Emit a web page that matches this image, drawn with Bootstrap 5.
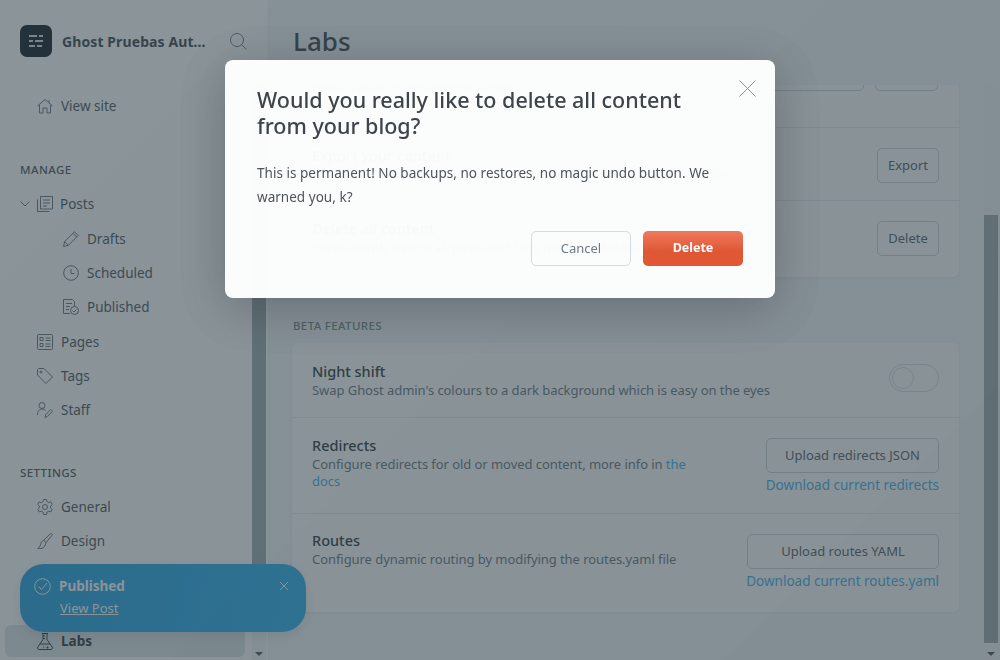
<!DOCTYPE html>
<html lang="en">
<head>
  <meta charset="UTF-8">
  <title>Labs - Ghost Pruebas</title>
  <meta name="viewport" content="width=device-width, initial-scale=1">
  <link href="https://cdn.jsdelivr.net/npm/bootstrap@5.3.3/dist/css/bootstrap.min.css" rel="stylesheet">
  <style>
    html, body { height: 100%; overflow: hidden; }
    body { font-family: "Noto Sans", "Open Sans", sans-serif; background: #f4f8fb; color: #3b444a; font-size: 13px; }
    svg { fill: none; stroke: currentColor; stroke-width: 1; flex: none; }

    /* sidebar */
    .side-wrap { width: 269px; height: 660px; background: #fff; border-right: 1px solid #f0f4f6; flex: none; }
    .side-head { height: 32px; margin: 25px 0 13px 20px; }
    .side-logo { width: 32px; height: 32px; background: #0f1b23; border-radius: 7px; color: #d5dbde; }
    .side-title { font-size: 14px; font-weight: 700; color: #3d4449; width: 150px; margin-left: 10px; white-space: nowrap; overflow: hidden; text-overflow: ellipsis; letter-spacing: .1px; }
    .side-search { color: #6e7b83; margin-left: 18px; }
    .side-nav { width: 252px; padding-top: 19px; }
    .nav-line { display: flex; align-items: center; height: 34px; padding-left: 37px; gap: 8px; color: #4b5358; font-size: 13.5px; }
    .nav-line svg { color: #66737b; }
    .nav-line.sub { padding-left: 63px; }
    .nav-line.caret { padding-left: 20px; gap: 7px; }
    .nudge-1 { margin-top: 1px; }
    .nav-line.on { margin: 67px 7px 0 5px; padding-left: 32px; height: 32px; background: #dfe5e8; border-radius: 6px; font-weight: 700; color: #2f363a; }
    .nav-line.on svg { color: #2f363a; }
    .nav-cap { padding-left: 20px; font-size: 11.5px; letter-spacing: .4px; color: #4b5358; font-weight: 500; height: 16px; line-height: 16px; }
    .gap-manage { margin-top: 39px; margin-bottom: 9px; }
    .gap-settings { margin-top: 38px; margin-bottom: 9px; }

    /* fake native scrollbars */
    .bar-track { width: 14px; background: #f4f6f7; display: flex; flex-direction: column; align-items: center; flex: none; }
    .bar-up { width: 0; height: 0; border: 4px solid transparent; border-top: 0; border-bottom: 4px solid #aab3b8; margin: 5px 0 6px; }
    .bar-down { width: 0; height: 0; border: 4px solid transparent; border-bottom: 0; border-top: 4px solid #4b5358; margin-top: auto; margin-bottom: 4px; }
    .bar-thumb { width: 100%; background: #a0aaaf; }
    .thumb-side { height: 520px; }
    .thumb-main { height: 428px; margin-top: 130px; }
    .bar-main { margin-right: 2px; }

    /* main column */
    .main-wrap { height: 660px; min-width: 0; }
    .main-head { height: 85px; padding: 24px 0 0 24px; flex: none; }
    .main-head h1 { font-size: 26px; font-weight: 500; line-height: 34px; margin: 0; color: #3d4449; }
    .main-clip { overflow: hidden; padding: 0 26px 0 23px; }
    .set-card { width: 667px; border: 0; border-radius: 6px; background: #fff; font-size: 13px; box-shadow: 0 1px 3px rgba(0, 0, 0, .06); }
    .first-card { margin-top: -42px; }
    .set-row { display: flex; justify-content: space-between; padding: 0 20px; border-bottom: 1px solid #e8edf0; }
    .set-row:last-child { border-bottom: 0; }
    .row-a { height: 85px; padding-top: 13px; }
    .row-b { height: 73px; padding-top: 17px; }
    .row-c { height: 76px; padding-top: 17px; }
    .row-d { height: 75px; padding-top: 18px; }
    .row-e { height: 96px; padding-top: 17px; }
    .row-f { height: 98px; padding-top: 16px; }
    .row-d .set-desc, .row-f .set-desc { margin-top: 1px; }
    .set-name { font-size: 14.5px; font-weight: 500; color: #2f363a; line-height: 20px; margin-bottom: 1px; }
    .set-desc { color: #6b767d; line-height: 17px; width: 400px; letter-spacing: -.06px; }
    .set-desc.wide { width: 480px; }
    .set-desc.thin { width: 240px; }
    .set-desc a, .set-link { color: #3eb0ef; text-decoration: none; }
    .set-btn { border: 1px solid #c9d3d8; border-radius: 5px; background: #fff; color: #566067; font-size: 13px; height: 35px; line-height: 33px; padding: 0; text-align: center; }
    .btn-sm-w { width: 62px; }
    .btn-import { width: 288px; margin-right: 11px; }
    .row-a .btn-sm-w { width: 63px; margin-right: 1px; }
    .btn-red-w { width: 173px; display: block; margin-left: auto; }
    .btn-rou-w { width: 192px; display: block; margin-left: auto; }
    .row-b .set-btn { margin-top: 3px; }
    .row-c .set-btn { margin-top: 3px; }
    .row-e .set-btn { margin-top: 3px; }
    .row-f .set-btn { margin-top: 4px; }
    .set-link { display: block; font-size: 13.5px; line-height: 24px; text-align: right; white-space: nowrap; }
    .beta-cap { font-size: 11.5px; font-weight: 500; color: #7c878d; margin: 42px 0 10px 1px; line-height: 14px; letter-spacing: .35px; }
    .set-toggle { width: 50px; height: 28px; border: 1px solid #d5dde1; border-radius: 14px; margin-top: 3px; padding: 2px; background: #fff; }
    .set-knob { width: 22px; height: 22px; border-radius: 50%; border: 1px solid #d5dde1; background: #fff; }

    /* toast sits under the backdrop */
    .pub-toast { position: absolute; left: 20px; top: 564px; width: 286px; height: 68px; border-radius: 24px; background: linear-gradient(100deg, #239fe0, #2bb0f0); color: #fff; padding: 12px 13px 0 14px; font-size: 13.5px; box-shadow: 0 4px 12px rgba(0, 0, 0, .1); }
    .pub-toast a { color: #fff; display: block; margin-left: 26px; margin-top: 3px; font-size: 13px; }

    /* dim layer + dialog */
    .modal-backdrop.dim-layer { opacity: 1; background: linear-gradient(135deg, rgba(50, 68, 76, .57), rgba(50, 66, 74, .58)); }
    .del-dialog { width: 550px; max-width: 550px; margin: 60px auto 0; opacity: .97; }
    .del-box { height: 238px; border: 0; border-radius: 8px; padding: 27px 32px 0 32px; box-shadow: 0 10px 50px rgba(0, 0, 0, .25); color: #3d4449; }
    .del-title { font-size: 21.5px; line-height: 26px; font-weight: 500; width: 450px; margin: 0 0 22px; color: #3a4248; }
    .del-text { font-size: 13.5px; line-height: 24px; margin: 0; color: #4a5358; width: 470px; letter-spacing: .03px; }
    .del-close { position: absolute; right: 19px; top: 20px; color: #8a9499; background: none; border: 0; padding: 0; line-height: 0; }
    .del-foot { margin-top: 22px; gap: 12px; }
    .del-cancel, .del-go { width: 100px; height: 35px; border-radius: 5px; font-size: 13px; padding: 0; }
    .del-cancel { border: 1px solid #d5dfe3; background: #fff; color: #6f7b82; }
    .del-go { border: 0; background: linear-gradient(#f2785b, #e25530 60%); color: #fff; font-weight: 700; font-size: 12.5px; }
  </style>
</head>
<body>
  <div class="d-flex">
    <!-- sidebar -->
    <div class="side-wrap d-flex flex-column">
      <div class="side-head d-flex align-items-center align-self-start">
        <div class="side-logo d-flex align-items-center justify-content-center">
          <svg width="16" height="14" viewBox="0 0 16 14" style="stroke-width:2.200"><path d="M1 2h8M11 2h4M1 7h4M7 7h8M1 12h6M9 12h5"/></svg>
        </div>
        <div class="side-title">Ghost Pruebas Automatizadas</div>
        <svg class="side-search" width="17" height="17" viewBox="0 0 17 17"><circle cx="7" cy="7" r="6.500"/><path d="M11.500 11.500l5 5"/></svg>
      </div>
      <div class="d-flex flex-grow-1">
        <div class="side-nav">
          <div class="nav-line"><svg width="16" height="16" viewBox="0 0 16 16"><path d="M.5 8L8 1.500 15.500 8M2.500 7v8h3.500v-5h4v5h3.500V7M12 2v2.500"/></svg>View site</div>
          <div class="nav-cap gap-manage">MANAGE</div>
          <div class="nav-line caret">
            <svg width="10" height="6" viewBox="0 0 10 6"><path d="M.5.500L5 5 9.500.500"/></svg>
            <svg width="16" height="16" viewBox="0 0 16 16"><path d="M3.500 13V.500h12V13zM.5 3.500v12h12M6 4h7M6 7h7M6 10h4"/></svg>Posts</div>
          <div class="nav-line sub nudge-1"><svg width="16" height="16" viewBox="0 0 16 16"><path d="M.5 15.500l1.200-5L11.500.800l3.700 3.700-9.800 9.800zM1.700 10.500l3.700 3.800M10 2.300l3.700 3.700"/></svg>Drafts</div>
          <div class="nav-line sub"><svg width="16" height="16" viewBox="0 0 16 16"><circle cx="8" cy="8" r="7.300"/><path d="M8 4v4.500h3.500"/></svg>Scheduled</div>
          <div class="nav-line sub"><svg width="16" height="16" viewBox="0 0 16 16"><path d="M7 14.500H.5V.500h9l2 2V7M3 4.500h6M3 7.500h4M3 10.500h3"/><circle cx="11.500" cy="11.500" r="4"/><path d="M9.500 11.500l1.500 1.500 2.500-2.500"/></svg>Published</div>
          <div class="nav-line nudge-1"><svg width="16" height="16" viewBox="0 0 16 16"><rect x=".5" y=".5" width="15" height="15" rx="1"/><path d="M3 3.500h3v3H3zM3 9.500h3v3H3zM8.500 4h5M8.500 6.500h5M8.500 10h5M8.500 12.500h5"/></svg>Pages</div>
          <div class="nav-line"><svg width="16" height="16" viewBox="0 0 16 16"><path d="M.5 1.500v5.500l8.500 8.500 6.500-6.500L7 .5H1.500z"/><circle cx="4" cy="4" r="1"/></svg>Tags</div>
          <div class="nav-line"><svg width="16" height="16" viewBox="0 0 16 16"><circle cx="5" cy="3.500" r="3"/><path d="M.5 13c0-4 2-6 4.500-6 1.500 0 2.500.5 3.500 1.500M8 15.500l.8-3 5-5 1.800 1.800-5 5z"/></svg>Staff</div>
          <div class="nav-cap gap-settings">SETTINGS</div>
          <div class="nav-line"><svg width="16" height="16" viewBox="0 0 16 16"><circle cx="8" cy="8" r="2.500"/><path d="M6.500.5h3l.5 2.200 1.600.9 2.200-.7 1.500 2.600-1.700 1.500v1.800l1.700 1.500-1.500 2.600-2.200-.7-1.600.9-.5 2.400h-3L6 13.100l-1.600-.9-2.200.7-1.500-2.600 1.700-1.500V7L.7 5.500l1.500-2.600 2.200.7L6 2.700z"/></svg>General</div>
          <div class="nav-line"><svg width="16" height="16" viewBox="0 0 16 16"><path d="M15 .8c.5.5.4 1-.2 1.800L9 9.500 6.700 7.200 13.200 1c.8-.6 1.300-.7 1.800-.2zM6.700 7.200C4.500 8 4 10 3.500 12 3 13.500 2 14 .8 15.500c3 .5 6-.3 7-2.500.5-1.200.8-2.200 1.200-3.500"/></svg>Design</div>
          <div class="nav-line on"><svg width="16" height="17" viewBox="0 0 16 17"><path d="M5 .5h6M6 .5v6L.8 14c-.7 1.300 0 2.500 1.200 2.500h12c1.200 0 1.900-1.200 1.200-2.500L10 6.500v-6M6 3h2M6 5.500h2M3 11h10M6 14h1M10.500 13.500v2M9.500 14.500h2"/></svg>Labs</div>
        </div>
        <div class="bar-track">
          <div class="bar-up"></div>
          <div class="bar-thumb thumb-side"></div>
          <div class="bar-down"></div>
        </div>
      </div>
    </div>

    <!-- main -->
    <div class="main-wrap d-flex flex-column flex-grow-1">
      <div class="main-head"><h1>Labs</h1></div>
      <div class="d-flex flex-grow-1 overflow-hidden">
        <div class="main-clip flex-grow-1">
          <div class="card set-card first-card">
            <div class="set-row row-a">
              <div>
                <div class="set-name">Import content</div>
                <div class="set-desc thin">Import posts from another Ghost installation</div>
              </div>
              <div class="d-flex">
                <div class="set-btn btn-import"></div>
                <div class="set-btn btn-sm-w"></div>
              </div>
            </div>
            <div class="set-row row-b">
              <div>
                <div class="set-name">Export your content</div>
                <div class="set-desc wide">Download all of your posts and settings in a single, glorious JSON file</div>
              </div>
              <button class="btn set-btn btn-sm-w">Export</button>
            </div>
            <div class="set-row row-c">
              <div>
                <div class="set-name">Delete all content</div>
                <div class="set-desc wide">Permanently delete all posts and tags from the database, a hard reset</div>
              </div>
              <button class="btn set-btn btn-sm-w">Delete</button>
            </div>
          </div>

          <div class="beta-cap">BETA FEATURES</div>

          <div class="card set-card">
            <div class="set-row row-d">
              <div>
                <div class="set-name">Night shift</div>
                <div class="set-desc wide">Swap Ghost admin's colours to a dark background which is easy on the eyes</div>
              </div>
              <div class="set-toggle"><div class="set-knob"></div></div>
            </div>
            <div class="set-row row-e">
              <div>
                <div class="set-name">Redirects</div>
                <div class="set-desc">Configure redirects for old or moved content, more info in <a href="#">the docs</a></div>
              </div>
              <div>
                <button class="btn set-btn btn-red-w">Upload redirects JSON</button>
                <a class="set-link" href="#">Download current redirects</a>
              </div>
            </div>
            <div class="set-row row-f">
              <div>
                <div class="set-name">Routes</div>
                <div class="set-desc">Configure dynamic routing by modifying the routes.yaml file</div>
              </div>
              <div>
                <button class="btn set-btn btn-rou-w">Upload routes YAML</button>
                <a class="set-link" href="#">Download current routes.yaml</a>
              </div>
            </div>
          </div>
        </div>
        <div class="bar-track bar-main">
          <div class="bar-thumb thumb-main"></div>
          <div class="bar-down"></div>
        </div>
      </div>
    </div>
  </div>

  <!-- notification -->
  <div class="pub-toast">
    <div class="d-flex align-items-center gap-2">
      <svg width="17" height="17" viewBox="0 0 17 17"><circle cx="8.500" cy="8.500" r="7.800"/><path d="M4.500 8.500l3 3L13 5"/></svg>
      <strong class="flex-grow-1">Published</strong>
      <svg width="10" height="10" viewBox="0 0 10 10" class="me-1"><path d="M1 1l8 8M9 1l-8 8"/></svg>
    </div>
    <a href="#">View Post</a>
  </div>

  <div class="modal-backdrop dim-layer"></div>
  <div class="modal d-block">
    <div class="modal-dialog del-dialog">
      <div class="modal-content del-box">
        <button class="del-close" type="button" aria-label="Close"><svg width="17" height="17" viewBox="0 0 17 17"><path d="M.5.500l16 16M16.500.500l-16 16"/></svg></button>
        <h1 class="del-title">Would you really like to delete all content from your blog?</h1>
        <p class="del-text">This is permanent! No backups, no restores, no magic undo button. We warned you, k?</p>
        <div class="d-flex justify-content-end del-foot">
          <button class="btn del-cancel" type="button">Cancel</button>
          <button class="btn del-go" type="button">Delete</button>
        </div>
      </div>
    </div>
  </div>
  <script src="https://cdn.jsdelivr.net/npm/bootstrap@5.3.3/dist/js/bootstrap.bundle.min.js"></script>
</body>
</html>
